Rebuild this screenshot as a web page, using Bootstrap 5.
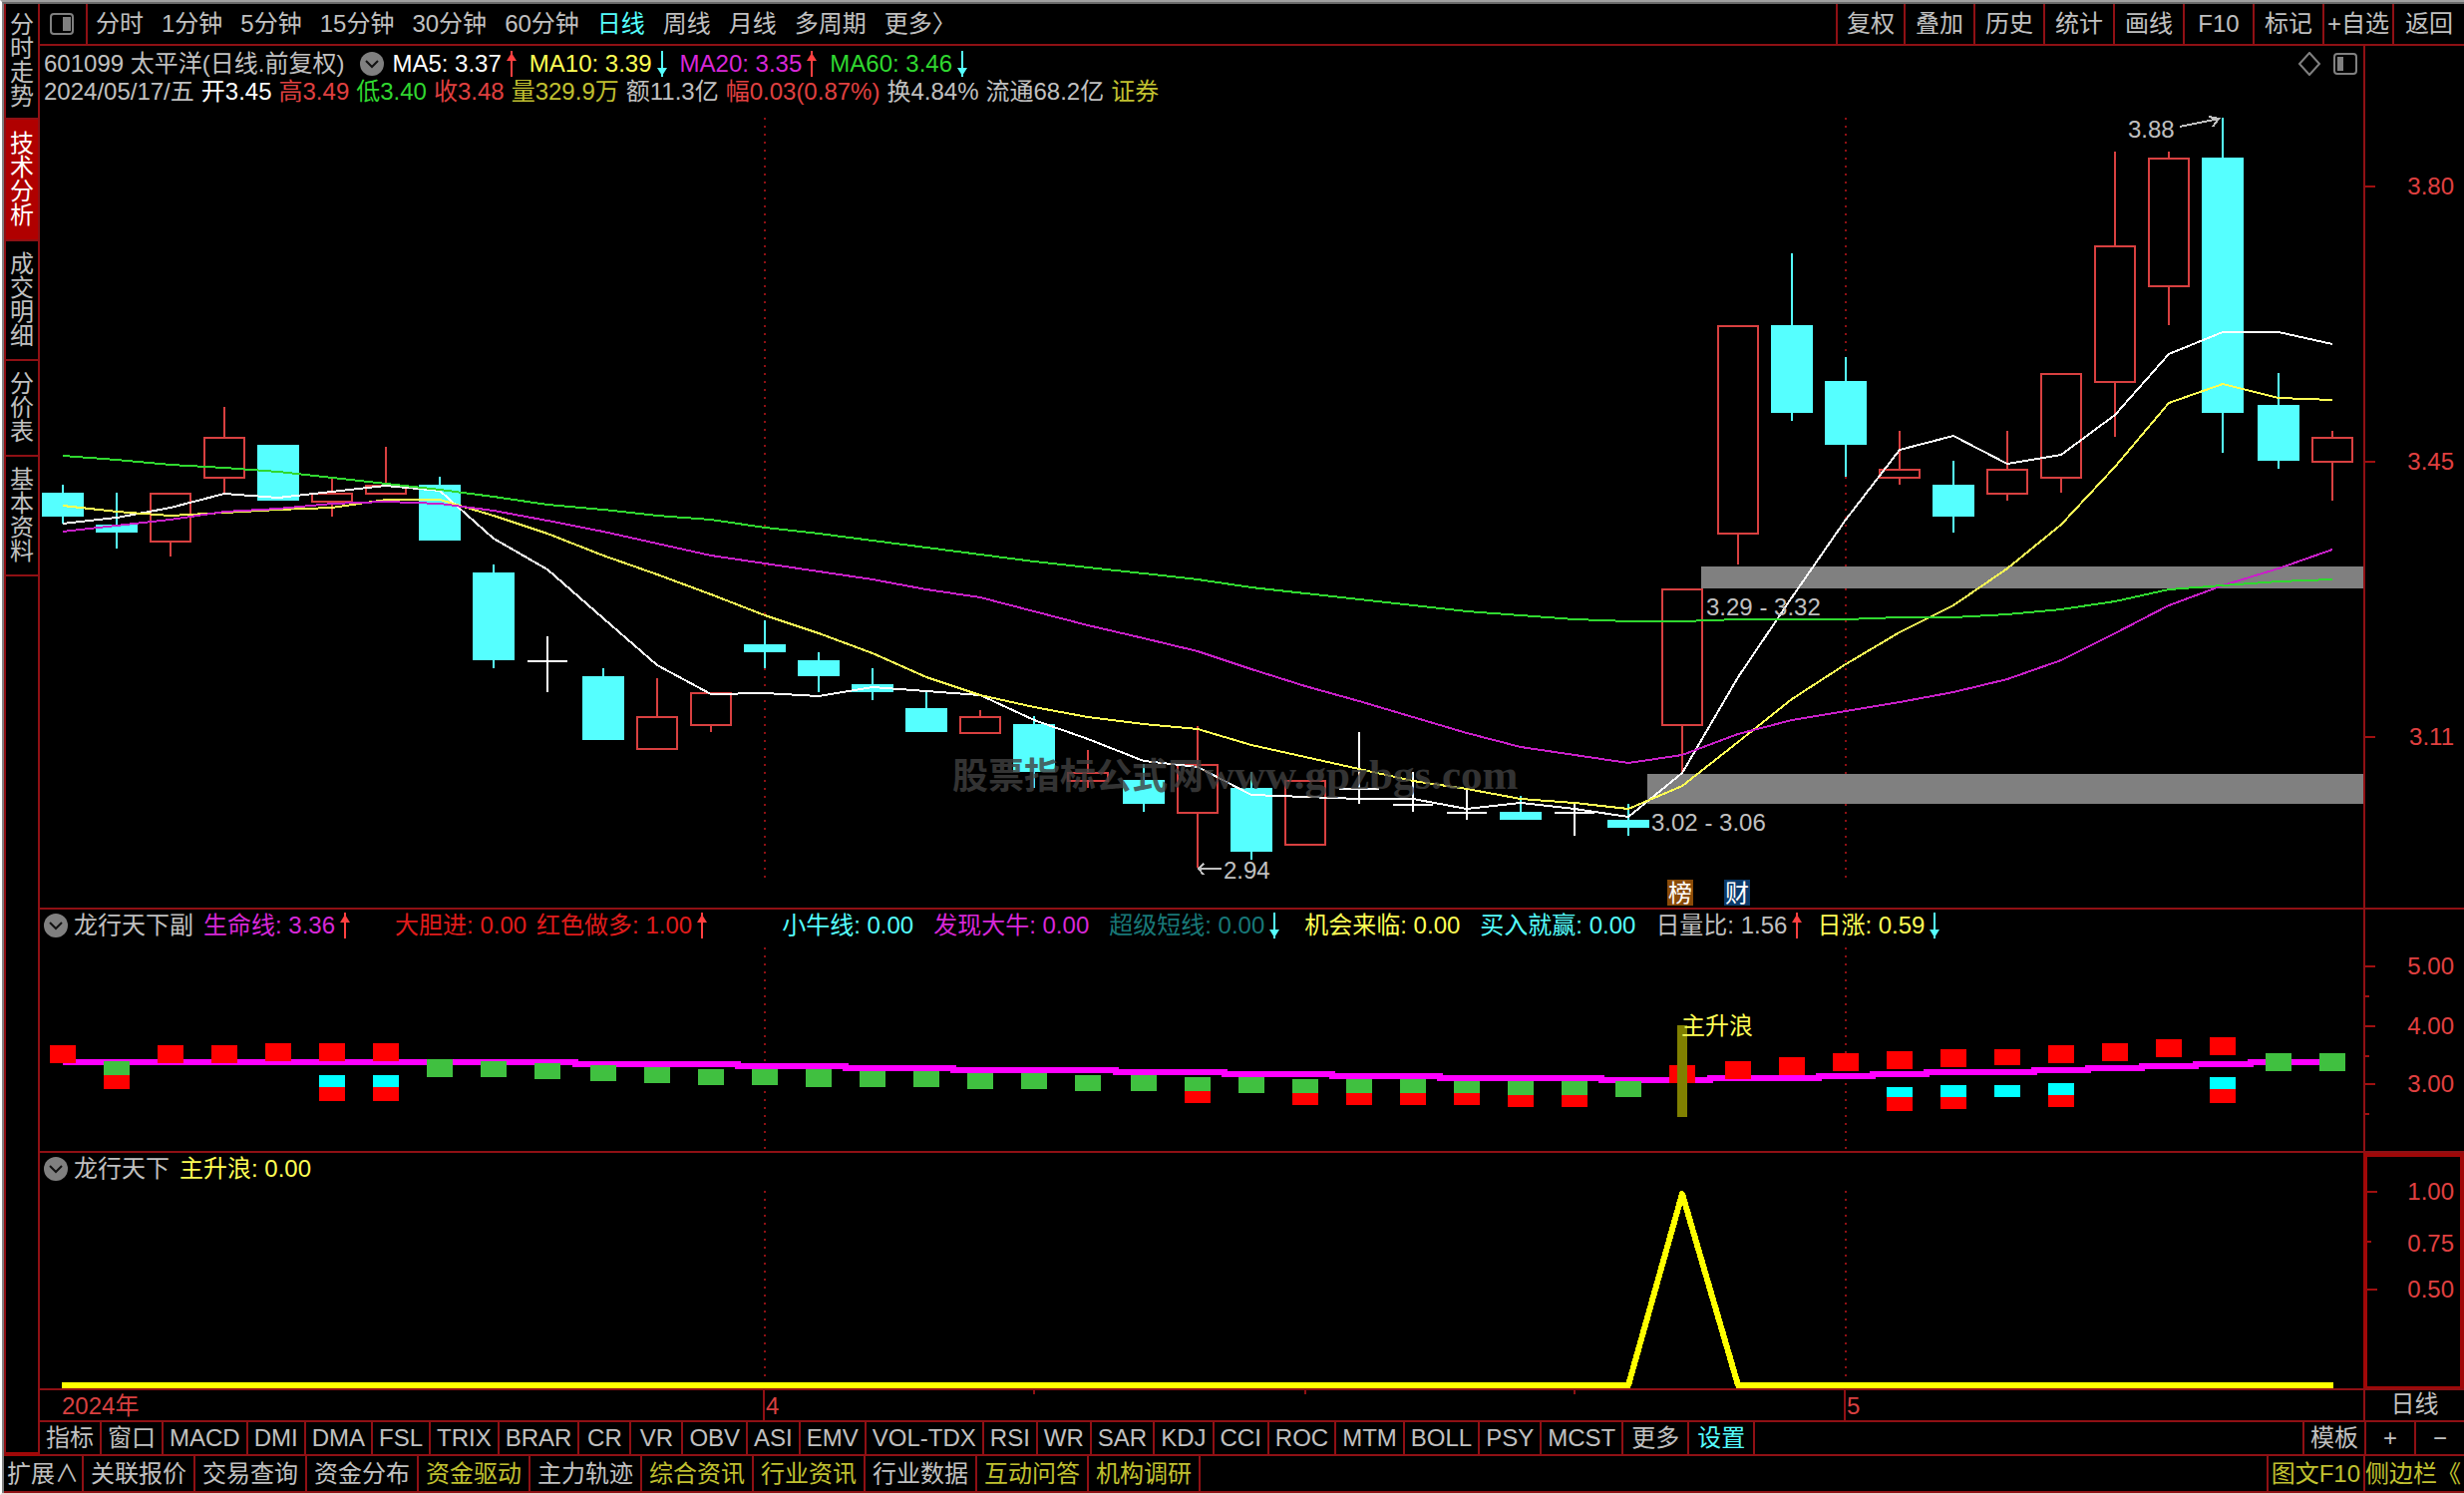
<!DOCTYPE html>
<html lang="zh-CN">
<head>
<meta charset="utf-8">
<meta name="viewport" content="width=device-width, initial-scale=1">
<title>601099 太平洋 - 日线</title>
<link rel="stylesheet" href="https://cdn.jsdelivr.net/npm/bootstrap@5.3.0/dist/css/bootstrap.min.css">
<style>
:root{--rule:#8f1014;--txt:#c0c0c0;--cy:#55ffff;--ye:#ffff55;--gold:#c0c030;--rd:#e04040;--mg:#d828d8;--gn:#30d830}
body{background:#000;color:var(--txt);font:400 24px/28px "Liberation Sans","Noto Sans CJK SC",sans-serif;overflow-x:hidden}
.frame{border-top:2px solid #a0a0a0;border-bottom:2px solid #f0d0d0;border-left:2px solid #fff;min-height:100vh}
.inner{border-top:2px solid #6a6a6a;border-left:2px solid #808080}
button{background:none;border:0;border-radius:0;color:inherit;font:inherit;padding:0;white-space:nowrap}
.side{width:36px;border-left:2px solid var(--rule);border-right:2px solid var(--rule);border-bottom:4px solid #a00808}
.side a{color:var(--txt);text-decoration:none;line-height:24px;padding:11px 4px;border-bottom:2px solid var(--rule);word-break:break-all;display:block}
.side a:first-child{padding:9px 4px}
.side a.on{background:#b00000;color:#fff;padding:12px 4px}
.fluid{flex:1 1 0;min-width:0}
.rule-b{border-bottom:2px solid var(--rule)}
.topbar{height:42px}
.topbar .ico{width:48px;border-right:2px solid var(--rule)}
.periods{gap:18px;padding-left:8px}
.tools button{width:70px;border-left:2px solid var(--rule)}
.tools button:first-child{width:68px}
.tools button:last-child{width:72px}
.c-w{color:#fff}
.c-cy,.cells>.c-cy{color:var(--cy)}
.c-ye{color:var(--ye)}
.c-gold,.cells>.c-gold{color:var(--gold)}
.c-rd{color:var(--rd)}.c-mg{color:var(--mg)}.c-gn{color:var(--gn)}.c-r2{color:#e01c1c}.c-teal{color:#187878}
.axis{width:101px;border-left:2px solid var(--rule)}
.axis.hot{border:4px solid #a00808;border-bottom-width:2px}
.legend{height:32px;padding-left:4px;gap:10px}
.legend .ttl{margin-left:-4px}
.head{height:60px;padding:4px 4px 0 4px}
.ohlc{gap:7px}
.arr{width:20px;height:26px;flex:none}
.sp10{margin-right:10px}.sp30{margin-right:30px}.sp60{margin-right:60px}
svg{display:block}
.plot{width:100%}
.h-main{height:804px}.h-sub{height:210px}.h-low{height:204px}
.h-time{height:30px}
.cells>*{border-right:2px solid var(--rule);padding:0 6px}
.rowa{height:34px}
.rowa .cells>*{min-width:52px}
.rowa .cells>.wide{padding:0 8px}
.rowb{height:37px}
.rowb .cells>*{padding:0 7px}
.rowb .cells>.tight{padding:0 3px}
.cells.ends>*{border-right:0;border-left:2px solid var(--rule)}
.rowa .cells>.w-half{width:50px;min-width:0}
.w-ax{width:101px}
.rowb .cells>.w-ax{padding:0}
svg text{font:24px "Liberation Sans","Noto Sans CJK SC",sans-serif}
svg text.wm{font:700 36px "Liberation Serif","Noto Sans CJK SC",serif}
svg .wm tspan{font-size:43px}
</style>
</head>
<body>
<div class="frame"><div class="inner">
<div class="d-flex">
  <nav class="side flex-shrink-0">
    <a href="#">分时走势</a><a href="#" class="on">技术分析</a><a href="#">成交明细</a><a href="#">分价表</a><a href="#">基本资料</a>
  </nav>
  <main class="fluid">
    <div class="topbar rule-b d-flex">
      <button class="ico d-flex align-items-center ps-2" aria-label="侧栏"><svg width="28" height="24"><rect x="3" y="2" width="22" height="20" rx="3" fill="none" stroke="#808080" stroke-width="2"/><rect x="15" y="5" width="8" height="14" fill="#808080"/></svg></button>
      <div class="periods d-flex align-items-center">
        <button>分时</button><button>1分钟</button><button>5分钟</button><button>15分钟</button><button>30分钟</button><button>60分钟</button><button class="c-cy">日线</button><button>周线</button><button>月线</button><button>多周期</button><button>更多〉</button>
      </div>
      <div class="tools d-flex ms-auto">
        <button>复权</button><button>叠加</button><button>历史</button><button>统计</button><button>画线</button><button>F10</button><button>标记</button><button>+自选</button><button>返回</button>
      </div>
    </div>

    <section class="rule-b d-flex">
      <div class="fluid">
        <div class="head">
          <div class="d-flex align-items-center">
            <span>601099 太平洋(日线.前复权)</span>
            <button class="ms-3 me-2" aria-label="菜单"><svg width="24" height="24"><circle cx="12" cy="12" r="12" fill="#808080"/><path d="M6 9l6 6 6-6" fill="none" stroke="#111" stroke-width="2"/></svg></button>
            <span class="c-w">MA5: 3.37</span><svg class="arr me-2"><use href="#up"/></svg>
            <span class="c-ye">MA10: 3.39</span><svg class="arr me-2"><use href="#dn"/></svg>
            <span class="c-mg">MA20: 3.35</span><svg class="arr me-2"><use href="#up"/></svg>
            <span class="c-gn">MA60: 3.46</span><svg class="arr"><use href="#dn"/></svg>
            <span class="ms-auto d-flex gap-2">
              <svg width="28" height="24"><path d="M14 1l10 11-10 11L4 12z" fill="none" stroke="#808080" stroke-width="2"/></svg>
              <svg width="28" height="24"><rect x="3" y="2" width="22" height="20" rx="3" fill="none" stroke="#808080" stroke-width="2"/><rect x="6" y="5" width="6" height="14" fill="#808080"/></svg>
            </span>
          </div>
          <div class="ohlc d-flex">
            <span>2024/05/17/五</span><span class="c-w">开3.45</span><span class="c-rd">高3.49</span><span class="c-gn">低3.40</span><span class="c-rd">收3.48</span><span class="c-gold">量329.9万</span><span>额11.3亿</span><span class="c-rd">幅0.03(0.87%)</span><span>换4.84%</span><span>流通68.2亿</span><span class="c-gold">证券</span>
          </div>
        </div>
        <svg class="plot h-main" id="kline"></svg>
      </div>
      <div class="axis flex-shrink-0"><svg id="ax1" width="99" height="864"></svg></div>
    </section>

    <section class="rule-b d-flex">
      <div class="fluid">
        <div class="legend d-flex align-items-center">
          <button aria-label="菜单"><svg width="24" height="24"><circle cx="12" cy="12" r="12" fill="#808080"/><path d="M6 9l6 6 6-6" fill="none" stroke="#111" stroke-width="2"/></svg></button>
          <span class="ttl">龙行天下副</span>
          <span class="d-flex align-items-center c-mg sp30">生命线: 3.36<svg class="arr"><use href="#up"/></svg></span>
          <span class="c-r2">大胆进: 0.00</span>
          <span class="d-flex align-items-center c-r2 sp60">红色做多: 1.00<svg class="arr"><use href="#up"/></svg></span>
          <span class="c-cy sp10">小牛线: 0.00</span>
          <span class="c-mg sp10">发现大牛: 0.00</span>
          <span class="d-flex align-items-center c-teal sp10">超级短线: 0.00<svg class="arr"><use href="#dn"/></svg></span>
          <span class="c-ye sp10">机会来临: 0.00</span>
          <span class="c-cy sp10">买入就赢: 0.00</span>
          <span class="d-flex align-items-center">日量比: 1.56<svg class="arr"><use href="#up"/></svg></span>
          <span class="d-flex align-items-center c-ye">日涨: 0.59<svg class="arr"><use href="#dn"/></svg></span>
        </div>
        <svg class="plot h-sub" id="sub"></svg>
      </div>
      <div class="axis flex-shrink-0"><svg id="ax2" width="99" height="242"></svg></div>
    </section>

    <section class="rule-b d-flex">
      <div class="fluid">
        <div class="legend d-flex align-items-center">
          <button aria-label="菜单"><svg width="24" height="24"><circle cx="12" cy="12" r="12" fill="#808080"/><path d="M6 9l6 6 6-6" fill="none" stroke="#111" stroke-width="2"/></svg></button>
          <span class="ttl">龙行天下</span><span class="c-ye">主升浪: 0.00</span>
        </div>
        <svg class="plot h-low" id="low"></svg>
      </div>
      <div class="axis hot flex-shrink-0"><svg id="ax3" width="93" height="230"></svg></div>
    </section>

    <div class="rule-b d-flex">
      <svg class="h-time fluid" id="time"></svg>
      <div class="axis flex-shrink-0 text-center">日线</div>
    </div>

    <div class="rowa rule-b d-flex">
      <div class="cells d-flex">
        <button>指标</button><button>窗口</button><button>MACD</button><button>DMI</button><button>DMA</button><button>FSL</button><button>TRIX</button><button>BRAR</button><button>CR</button><button>VR</button><button>OBV</button><button>ASI</button><button>EMV</button><button>VOL-TDX</button><button>RSI</button><button>WR</button><button>SAR</button><button>KDJ</button><button>CCI</button><button>ROC</button><button>MTM</button><button>BOLL</button><button>PSY</button><button>MCST</button><button class="wide">更多</button><button class="wide c-cy">设置</button>
      </div>
      <div class="cells ends d-flex ms-auto"><button>模板</button><button class="w-half">+</button><button class="w-half">−</button></div>
    </div>
  </main>
</div>
<div class="rowb rule-b d-flex">
  <div class="cells d-flex">
    <button class="tight">扩展∧</button><button>关联报价</button><button>交易查询</button><button>资金分布</button><button class="c-gold">资金驱动</button><button>主力轨迹</button><button class="c-gold">综合资讯</button><button class="c-gold">行业资讯</button><button>行业数据</button><button class="c-gold">互动问答</button><button class="c-gold">机构调研</button>
  </div>
  <div class="cells ends d-flex ms-auto"><button class="c-gold tight">图文F10</button><button class="c-gold w-ax text-start">侧边栏《</button></div>
</div>
</div></div>

<svg width="0" height="0" class="position-absolute">
  <symbol id="up" viewBox="0 0 20 26"><path d="M10 0v26" stroke="#ff4040" stroke-width="2"/><path d="M10 2l5 8H5z" fill="#ff4040"/></symbol>
  <symbol id="dn" viewBox="0 0 20 26"><path d="M10 0v26" stroke="#55ffff" stroke-width="2"/><path d="M10 25l5-8H5z" fill="#55ffff"/></symbol>
</svg>

<script src="https://cdn.jsdelivr.net/npm/bootstrap@5.3.0/dist/js/bootstrap.bundle.min.js"></script>
<script>
// Candles: kind (d = down, u = up, x = doji), high, body top, body bottom, low
const K=[['d',486,494,518,525],['d',494,526,534,550],['u',494,494,544,558],['u',408,438,480,494],['d',446,446,502,502],
['u',480,494,504,518],['u',448,486,496,496],['d',478,486,542,542],['d',566,574,662,670],['x',638,662,664,694],
['d',670,678,742,742],['u',680,718,752,752],['u',694,694,728,734],['d',622,646,654,670],['d',654,662,678,694],
['d',670,686,694,702],['d',694,710,734,734],['u',712,718,736,736],['d',718,726,774,790],['u',752,774,784,790],
['d',766,782,806,814],['u',728,766,816,870],['d',774,790,854,862],['u',782,782,848,848],['x',734,790,792,806],
['x',774,806,808,814],['x',790,814,816,822],['d',798,814,822,822],['x',806,814,816,838],['d',806,822,830,838],
['u',590,590,728,774],['u',326,326,536,566],['d',254,326,414,422],['d',358,382,446,478],['u',432,470,480,486],
['d',462,486,518,534],['u',432,470,496,502],['u',374,374,480,494],['u',152,246,384,438],['u',152,158,288,326],
['d',118,158,414,454],['d',374,406,462,470],['u',432,438,464,502]];
const MA={
'#ffffff':[525,519,509,495,499,493,487,492,540,571,620,667,696,695,698,689,693,697,722,741,763,769,797,799,801,801,811,805,811,819,775,679,599,521,451,437,465,456,416,355,333,333,345],
'#ffff55':[507,513,517,514,511,509,501,501,517,535,557,576,596,617,635,655,679,697,709,719,726,731,747,759,771,783,791,801,805,811,788,744,701,666,634,607,570,526,468,404,385,399,401],
'#c820c8':[533,527,521,513,510,505,503,505,512,522,533,545,557,565,573,581,591,599,613,627,640,653,671,688,703,719,735,749,757,765,757,736,722,713,704,694,681,662,635,607,587,570,551],
'#30d830':[457,461,466,469,473,479,485,491,498,506,511,517,521,529,535,542,549,556,563,569,575,581,589,595,601,607,613,617,621,623,623,621,621,621,619,619,616,611,603,591,587,583,581]};
const LIFE=[1065,1065,1065,1065,1065,1065,1065,1065,1065,1065,1067,1067,1067,1069,1069,1071,1071,1073,1073,1073,1075,1075,1077,1077,1079,1079,1081,1081,1081,1083,1083,1081,1081,1079,1077,1075,1075,1073,1071,1069,1067,1065,1065];
// Blocks: index, colour, top, bottom
const B=[[0,'r',1048,1066],[2,'r',1048,1066],[3,'r',1048,1066],[4,'r',1046,1064],[5,'r',1046,1064],[6,'r',1046,1064],
[1,'g',1064,1078],[1,'r',1078,1092],[5,'c',1078,1090],[5,'r',1090,1104],[6,'c',1078,1090],[6,'r',1090,1104],
[7,'g',1062,1080],[8,'g',1064,1080],[9,'g',1066,1082],[10,'g',1068,1084],[11,'g',1070,1086],[12,'g',1072,1088],[13,'g',1072,1088],[14,'g',1072,1090],[15,'g',1074,1090],[16,'g',1074,1090],[17,'g',1076,1092],[18,'g',1076,1092],[19,'g',1078,1094],[20,'g',1078,1094],
[21,'g',1080,1094],[21,'r',1094,1106],[22,'g',1080,1096],[23,'g',1082,1096],[23,'r',1096,1108],[24,'g',1082,1096],[24,'r',1096,1108],[25,'g',1082,1096],[25,'r',1096,1108],[26,'g',1084,1096],[26,'r',1096,1108],[27,'g',1084,1098],[27,'r',1098,1110],[28,'g',1084,1098],[28,'r',1098,1110],[29,'g',1084,1100],
[30,'r',1068,1086],[31,'r',1064,1082],[32,'r',1060,1078],[33,'r',1056,1074],[34,'r',1054,1072],[34,'c',1090,1100],[34,'r',1100,1114],[35,'r',1052,1070],[35,'c',1088,1100],[35,'r',1100,1112],[36,'r',1052,1068],[36,'c',1088,1100],[37,'r',1048,1066],[37,'c',1086,1098],[37,'r',1098,1110],[38,'r',1046,1064],[39,'r',1042,1060],[40,'r',1040,1058],[40,'c',1080,1092],[40,'r',1092,1106],[41,'g',1056,1074],[42,'g',1056,1074]];
const COL={r:'#ff0000',g:'#40c040',c:'#00ffff'},RED='#d84040',CY='#55ffff',DIM='#8f1014';
const $=id=>document.getElementById(id);
const rect=(x,y,w,h,f)=>`<rect x="${x}" y="${y}" width="${w}" height="${h}" fill="${f}"/>`;
const text=(x,y,s,f,extra='')=>`<text x="${x}" y="${y}" fill="${f}" ${extra}>${s}</text>`;
const dots=(x,a,b)=>{let s='';for(let y=a;y<b;y+=8)s+=rect(x-1,y,2,2,DIM);return s};
const put=(id,top,s)=>{$(id).innerHTML=`<g transform="translate(0,${-top})" shape-rendering="crispEdges">${s}</g>`};

function draw(){
  // columns snap to a two-pixel grid so that wicks stay sharp
  const W=$('kline').clientWidth, step=(W-54)/42, X=i=>1+2*Math.floor((22.2+i*step)/2);
  // price pane
  let s=dots(X(13),118,886)+dots(X(33),118,886);
  s+=rect(X(31)-37,568,W-X(31)+37,22,'#808080')+rect(X(30)-35,776,W-X(30)+35,30,'#808080');
  K.forEach(([k,h,t,b,l],i)=>{
    const x=X(i), c=k=='d'?CY:k=='u'?RED:'#ffffff';
    if(t>h)s+=rect(x-1,h,2,t-h,c);
    if(l>b)s+=rect(x-1,b,2,l-b,c);
    s+=k=='u'?`<rect x="${x-20}" y="${t+1}" width="40" height="${b-t-2}" fill="none" stroke="${c}" stroke-width="2"/>`:k=='d'?rect(x-21,t,42,b-t,c):rect(x-20,t,40,2,c);
  });
  for(const c in MA)s+=`<polyline fill="none" stroke="${c}" stroke-width="2" points="${MA[c].map((y,i)=>X(i)+','+y).join(' ')}"/>`;
  s+=text(X(31)-32,617,'3.29 - 3.32','#c0c0c0')+text(X(30)-31,833,'3.02 - 3.06','#c0c0c0');
  s+=text(X(40)-95,138,'3.88','#c0c0c0')+`<path d="M${X(40)-43} 127L${X(40)-4} 119M${X(40)-14} 117l10 2-6 8" fill="none" stroke="#c0c0c0" stroke-width="2"/>`;
  s+=text(X(21)+26,881,'2.94','#c0c0c0')+`<path d="M${X(21)+24} 871H${X(21)+1}M${X(21)+6} 866l-5 5 5 6" fill="none" stroke="#c0c0c0" stroke-width="2"/>`;
  s+=rect(X(30)-15,882,26,26,'#8a4b08')+text(X(30)-14,904,'榜','#fff')+rect(X(31)-14,882,26,26,'#0a3a6b')+text(X(31)-13,904,'财','#fff');
  s+=text(X(17)-28,791,'股票指标公式网<tspan>www.gpzbgs.com</tspan>','#404040','class="wm" opacity=".8"');
  put('kline',106,s);
  // indicator pane
  s=dots(X(13),950,1152)+dots(X(33),950,1152);
  let d=`M${X(0)} ${LIFE[0]}`;
  for(let i=1;i<43;i++)d+=`H${Math.round((X(i-1)+X(i))/2)}V${LIFE[i]}`;
  s+=`<path d="${d}H${X(42)}" fill="none" stroke="#ff00ff" stroke-width="6"/>`;
  B.forEach(([i,c,a,b])=>s+=rect(X(i)-13,a,26,b-a,COL[c]));
  s+=rect(X(30)-5,1028,10,92,'#808000')+text(X(30)-1,1037,'主升浪','#ffff55');
  put('sub',944,s);
  // signal pane
  s=dots(X(13),1194,1384)+dots(X(33),1194,1384);
  s+=`<polyline points="${X(0)-1},1389 ${X(29)},1389 ${X(30)},1197 ${X(31)},1389 ${X(42)+1},1389" fill="none" stroke="#ffff00" stroke-width="6" stroke-linejoin="round"/>`;
  put('low',1188,s);
  // date row
  s=text(X(0)-1,1418,'2024年',RED)+text(X(13)+1,1418,'4',RED)+text(X(33)+1,1418,'5',RED)+rect(X(13)-2,1394,2,30,DIM)+rect(X(33)-2,1394,2,30,DIM);
  [18,23,28].forEach(i=>s+=rect(X(i)-1,1394,2,4,DIM));
  put('time',1394,s);
}
function axis(id,top,right,labels,major,minor){
  put(id,top,major.map(y=>rect(0,y-1,10,2,'#a01010')).join('')+minor.map(y=>rect(0,y-1,4,2,'#a01010')).join('')+
    labels.map(([y,t])=>text(right,y+8,t,'#e04040','text-anchor="end"')).join(''));
}
axis('ax1',46,89,[[187,'3.80'],[463,'3.45'],[739,'3.11']],[187,463,739],[]);
axis('ax2',912,89,[[969,'5.00'],[1029,'4.00'],[1087,'3.00']],[969,1029,1087],[999,1059,1117]);
axis('ax3',1160,87,[[1195,'1.00'],[1247,'0.75'],[1293,'0.50']],[1195,1293],[1245]);
draw();
addEventListener('resize',draw);
</script>
</body>
</html>
